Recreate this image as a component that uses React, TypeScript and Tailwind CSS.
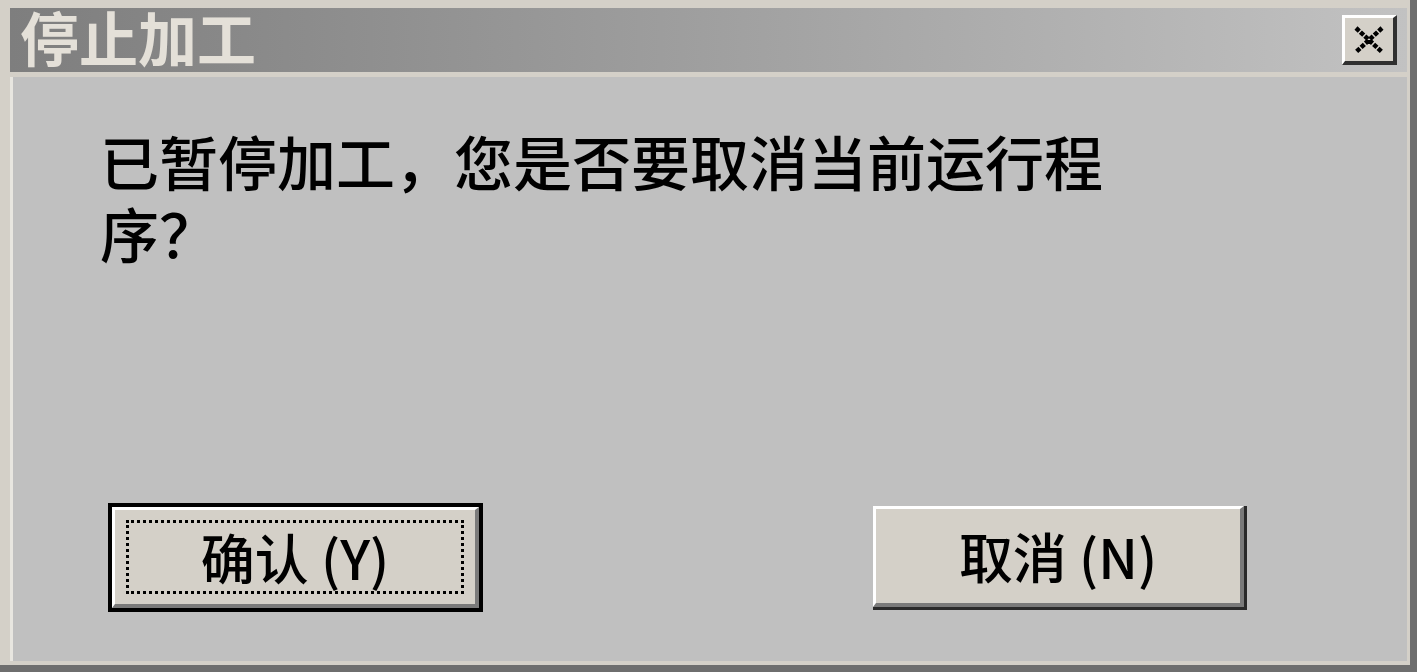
const cjk = "font-['Noto_Sans_CJK_SC','Noto_Sans',sans-serif]";

function CloseIcon() {
  return (
    <svg width="32" height="28" viewBox="0 0 32 28" fill="none">
      <path d="M3 2 L29 26 M29 2 L3 26" stroke="#000" strokeWidth="4.5" strokeDasharray="4.5 1.5" />
    </svg>
  );
}

function TitleBar() {
  return (
    <div className="flex h-[64px] items-center justify-between bg-gradient-to-r from-[#7e7e7e] to-[#c2c2c2] pl-[10px] pr-[10px]">
      <span className={`${cjk} mb-[6px] text-[59px] font-bold leading-[58px] text-[#e4e0d8]`}>停止加工</span>
      <button className="flex h-[50px] w-[55px] items-center justify-center border-t-[3px] border-l-[3px] border-r-[4px] border-b-[4px] border-t-white border-l-white border-r-[#303030] border-b-[#303030] bg-[#d4d0c8]">
        <CloseIcon />
      </button>
    </div>
  );
}

function DialogButton({ label, isDefault }: { label: string; isDefault?: boolean }) {
  const text = (
    <span className={`${cjk} text-[54px] font-medium leading-none text-black`}>{label}</span>
  );
  const face = (
    <div className="flex h-full w-full items-center justify-center border-t-[3px] border-l-[3px] border-r-[4px] border-b-[4px] border-t-white border-l-white border-r-[#7a7a7a] border-b-[#7a7a7a] bg-[#d4d0c8]">
      {isDefault ? (
        <div className="flex h-[74px] w-[338px] items-center justify-center border-[3px] border-dotted border-black">
          {text}
        </div>
      ) : (
        text
      )}
    </div>
  );

  if (isDefault) {
    return <div className="h-[109px] w-[375px] border-[4px] border-black">{face}</div>;
  }
  return (
    <div className="h-[104px] w-[374px] border-r-[3px] border-b-[3px] border-[#2a2a2a]">{face}</div>
  );
}

export default function App() {
  return (
    <div className="flex h-[672px] w-[1417px] flex-col border-r-[7px] border-b-[7px] border-[#6e6e6e] bg-[#d4d0c8] pt-[8px] pl-[3px] pr-[3px] pb-[4px]">
      <div className="flex flex-1 flex-col border-l-[7px] border-[#d4d0c8]">
        <TitleBar />
        <section
          aria-label="Dialog body"
          className="mt-[5px] flex flex-1 flex-col justify-between border-l-[3px] border-[#e8e6e0] bg-[#c0c0c0] pt-[48px] pb-[49px]"
        >
          <p className={`${cjk} w-[1117px] pl-[87px] text-[59px] font-medium leading-[72px] text-black`}>
            已暂停加工，您是否要取消当前运行程序？
          </p>
          <div className="flex items-center justify-between pl-[95px] pr-[160px]">
            <DialogButton label="确认 (Y)" isDefault />
            <DialogButton label="取消 (N)" />
          </div>
        </section>
      </div>
    </div>
  );
}
